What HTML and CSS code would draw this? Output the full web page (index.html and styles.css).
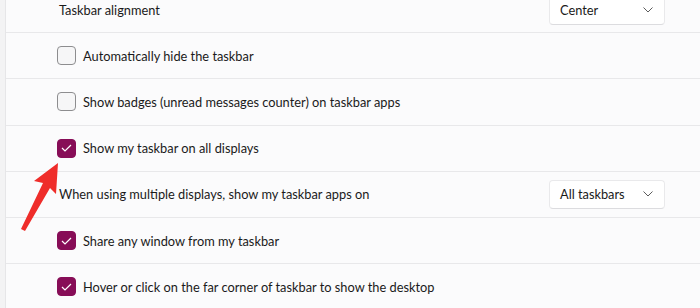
FILE: index.html
```html
<!DOCTYPE html>
<html lang="en">
<head>
    <meta charset="UTF-8">
    <title>Taskbar behaviors</title>
    <link rel="stylesheet" href="styles.css">
</head>
<body>
<div class="page">
    <div class="rail"></div>

    <!-- Taskbar behaviors list -->
    <div class="settings">
        <div class="row">
            <span class="label">Taskbar alignment</span>
            <button class="combo combo-top">Center
                <svg class="chev" width="10" height="6" viewBox="0 0 10 6"><path d="M0.5 0.5 L5 5 L9.5 0.5" fill="none" stroke="#5c5c5c" stroke-width="1"/></svg>
            </button>
        </div>
        <label class="row check-row">
            <span class="box"></span>
            <span class="label">Automatically hide the taskbar</span>
        </label>
        <label class="row check-row">
            <span class="box"></span>
            <span class="label">Show badges (unread messages counter) on taskbar apps</span>
        </label>
        <label class="row check-row">
            <span class="box checked"><svg width="11" height="8" viewBox="0 0 11 8"><path d="M1 4 L4 7 L10 1" fill="none" stroke="#fff" stroke-width="1.2"/></svg></span>
            <span class="label">Show my taskbar on all displays</span>
        </label>
        <div class="row">
            <span class="label">When using multiple displays, show my taskbar apps on</span>
            <button class="combo">All taskbars
                <svg class="chev" width="10" height="6" viewBox="0 0 10 6"><path d="M0.5 0.5 L5 5 L9.5 0.5" fill="none" stroke="#5c5c5c" stroke-width="1"/></svg>
            </button>
        </div>
        <label class="row check-row">
            <span class="box checked"><svg width="11" height="8" viewBox="0 0 11 8"><path d="M1 4 L4 7 L10 1" fill="none" stroke="#fff" stroke-width="1.2"/></svg></span>
            <span class="label">Share any window from my taskbar</span>
        </label>
        <label class="row check-row">
            <span class="box checked"><svg width="11" height="8" viewBox="0 0 11 8"><path d="M1 4 L4 7 L10 1" fill="none" stroke="#fff" stroke-width="1.2"/></svg></span>
            <span class="label">Hover or click on the far corner of taskbar to show the desktop</span>
        </label>
    </div>

    <!-- red annotation arrow -->
    <svg class="arrow" width="700" height="308" viewBox="0 0 700 308">
        <polygon points="58,163 56,194 50,188 25,231 21,229 43,183 34,181" fill="#ef2d2a"/>
    </svg>
</div>
</body>
</html>
```

FILE: styles.css
```css
* { box-sizing: border-box; }
html, body {
  margin: 0;
  height: 100%;
  overflow: hidden;
}
body {
  font-family: Lato, 'Noto Sans', sans-serif;
  font-size: 12.8px;
  color: #1a1a1a;
  background: #fbfbfc;
}
.page {
  position: relative;
  display: flex;
  height: 308px;
}
/* left nav edge */
.rail {
  width: 6px;
  flex-shrink: 0;
  background: #f3f3f4;
  border-right: 1px solid #e6e6e8;
}
.settings {
  flex-grow: 1;
  margin-top: -13px;
}
.row {
  display: flex;
  align-items: center;
  justify-content: space-between;
  height: 46.2px;
  padding: 0 35px 0 53px;
  border-bottom: 1px solid #e8e8ea;
}
.check-row {
  justify-content: flex-start;
  gap: 7px;
  padding-left: 51px;
}
.label { white-space: nowrap; }
/* checkboxes */
.box {
  width: 19px;
  height: 19px;
  border: 1px solid #8d8d8f;
  border-radius: 4px;
  background: #f6f6f7;
  display: flex;
  align-items: center;
  justify-content: center;
  flex-shrink: 0;
}
.box.checked {
  background: #870d57;
  border-color: #870d57;
}
/* dropdowns */
.combo {
  width: 116px;
  height: 29px;
  display: flex;
  align-items: center;
  justify-content: space-between;
  padding: 0 11px 0 10px;
  font: inherit;
  color: #1a1a1a;
  background: #fff;
  border: 1px solid #e9e9eb;
  border-bottom-color: #dcdcdf;
  border-radius: 4px;
}
.combo-top { margin-top: 1px; }
.arrow {
  position: absolute;
  top: 0;
  left: 0;
  pointer-events: none;
}
```
